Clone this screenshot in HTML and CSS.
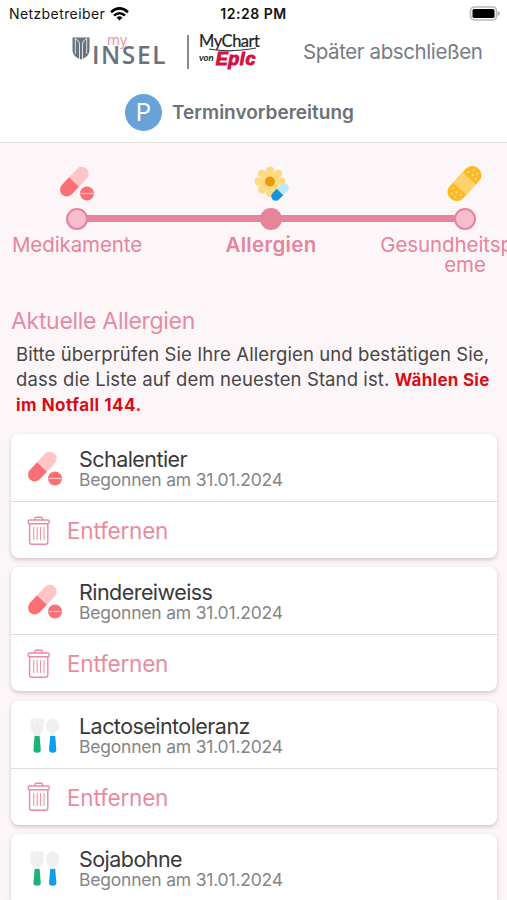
FILE: index.html
```html
<!DOCTYPE html>
<html lang="de">
<head>
    <meta charset="UTF-8">
    <meta name="viewport" content="width=device-width, initial-scale=1.0">
    <title>Terminvorbereitung</title>
    <link rel="stylesheet" href="styles.css">
</head>
<body>
    <!-- shared icons -->
    <svg class="sprite" width="0" height="0">
        <symbol id="pills" viewBox="0 0 36 36">
            <g transform="rotate(43 15 16)">
                <path d="M8.200 16V4.500a6.800 6.800 0 0 1 13.600 0V16z" fill="#fec4c6"/>
                <path d="M8.200 16h13.600v10.500a6.800 6.800 0 0 1-13.600 0z" fill="#fb6f74"/>
            </g>
            <circle cx="28" cy="27.500" r="7" fill="#fb6f74"/>
            <path d="M21.500 27.500h13" stroke="#fec4c6" stroke-width="1.200"/>
        </symbol>
        <symbol id="cutlery" viewBox="0 0 36 36">
            <path d="M3.500 2q0-1.500 1.500-1.500h10q1.500 0 1.500 1.500v7q0 4-3.500 6.500V18H7v-2.500Q3.500 13 3.500 9z" fill="#edeff1"/>
            <path d="M7.800.500v6M12.200.500v6" stroke="#fff" stroke-width=".6"/>
            <ellipse cx="25.700" cy="7.800" rx="6.600" ry="7.300" fill="#edeff1"/>
            <path d="M23.500 13H28v5h-4.500z" fill="#edeff1"/>
            <path d="M7.600 18h5l1.200 14q0 2.700-3.700 2.700T6.400 32z" fill="#1bb477"/>
            <path d="M23.200 18h5l1.200 14q0 2.700-3.700 2.700T22 32z" fill="#0c9fec"/>
        </symbol>
        <symbol id="trash" viewBox="0 0 24 30">
            <g fill="none" stroke="#e98ba0" stroke-width="1.400">
                <path d="M8 4V2.500Q8 1.200 9.500 1.200h4.500q1.500 0 1.500 1.300V4"/>
                <rect x="1.200" y="4" width="21" height="3.800" rx="1.600"/>
                <path d="M2.600 8v18q0 2.300 2.300 2.300h13.600q2.300 0 2.300-2.300V8"/>
                <path d="M6.800 11v13M10.200 11v13M13.600 11v13M17 11v13" stroke-width="1"/>
            </g>
        </symbol>
    </svg>

    <header class="header">
        <div class="status-bar">
            <div class="carrier">
                <span>Netzbetreiber</span>
                <svg width="19" height="14" viewBox="0 0 19 14">
                    <g fill="none" stroke="#000" stroke-width="2.500">
                        <path d="M1 5.200Q9.500-2.400 18 5.200"/>
                        <path d="M4 8.600q5.500-4.800 11 0"/>
                    </g>
                    <path d="M6.500 10.500q3-2.400 6 0L9.500 13.500z"/>
                </svg>
            </div>
            <span class="clock">12:28 PM</span>
            <svg class="battery" width="31" height="15" viewBox="0 0 31 15">
                <rect x="1.500" y="1" width="26" height="13" rx="4" fill="#fff" stroke="#b9b9b9" stroke-width="1.600"/>
                <rect x="3.500" y="3" width="22" height="9" rx="1.500"/>
                <path d="M28.800 5q2 .8 2 2.500t-2 2.500z" fill="#aaa"/>
            </svg>
        </div>
        <div class="brand-bar">
            <div class="insel">
                <svg width="18" height="23" viewBox="0 0 18 23">
                    <path d="M.5.500h17v13q0 6-8.500 9-8.500-3-8.500-9z" fill="#69737b"/>
                    <path d="M3.300 1v16M14.700 1v16M3.500 2q4 1 4 5v15M14.500 2q-4 1-4 5v15" fill="none" stroke="#fff" stroke-width=".8"/>
                </svg>
                <div class="insel-name">
                    <span class="my">my</span>
                    <span class="insel-text">INSEL</span>
                </div>
            </div>
            <div class="divider"></div>
            <div class="mychart">
                <span class="mychart-text">MyChart</span>
                <svg class="swoosh" width="48" height="5" viewBox="0 0 48 5"><path d="M0 2q20 4 47-1" fill="none" stroke="#333" stroke-width="1.200"/></svg>
                <div class="epic"><span class="von">von</span><span class="epic-text">Epic</span></div>
            </div>
            <a class="later">Später abschließen</a>
        </div>
        <div class="title-bar">
            <span class="avatar">P</span>
            <h1>Terminvorbereitung</h1>
        </div>
    </header>

    <nav class="stepper">
        <div class="step">
            <svg class="step-icon" width="36" height="36"><use href="#pills"/></svg>
            <span class="dot"></span>
            <span class="step-label">Medikamente</span>
        </div>
        <div class="step active">
            <svg class="step-icon" width="36" height="36" viewBox="0 0 36 36">
                <g fill="#ffda80">
                    <circle cx="17" cy="4.500" r="4"/><circle cx="25" cy="7.700" r="4"/>
                    <circle cx="28.500" cy="15.500" r="4"/><circle cx="25" cy="23.500" r="4"/>
                    <circle cx="17" cy="27" r="4"/><circle cx="9" cy="23.500" r="4"/>
                    <circle cx="5.500" cy="15.500" r="4"/><circle cx="9" cy="7.700" r="4"/>
                    <circle cx="17" cy="15.500" r="9"/>
                </g>
                <circle cx="17" cy="15.500" r="5" fill="#e89b0a"/>
                <g transform="rotate(45 27 26)">
                    <path d="M22.500 26v-6a4.500 4.500 0 0 1 9 0v6z" fill="#bce7fc"/>
                    <path d="M22.500 26h9v6a4.500 4.500 0 0 1-9 0z" fill="#1295dc"/>
                </g>
            </svg>
            <span class="dot"></span>
            <span class="step-label">Allergien</span>
        </div>
        <div class="step">
            <svg class="step-icon" width="36" height="36" viewBox="0 0 36 36">
                <g transform="rotate(43 17.500 17.500)">
                    <rect x="8.500" y="-3" width="18" height="41" rx="8.500" fill="#fdb924"/>
                    <rect x="8.500" y="10.500" width="18" height="14" fill="#ffd36b"/>
                    <g fill="#ffe3a0">
                        <circle cx="15" cy="1.500" r="1"/><circle cx="20" cy="1.500" r="1"/>
                        <circle cx="12.500" cy="6.500" r="1"/><circle cx="17.500" cy="5.500" r="1"/><circle cx="22.500" cy="6.500" r="1"/>
                        <circle cx="12.500" cy="28.500" r="1"/><circle cx="17.500" cy="29.500" r="1"/><circle cx="22.500" cy="28.500" r="1"/>
                        <circle cx="15" cy="33.500" r="1"/><circle cx="20" cy="33.500" r="1"/>
                    </g>
                </g>
            </svg>
            <span class="dot"></span>
            <span class="step-label">Gesundheitsprobl<br>eme</span>
        </div>
    </nav>

    <main class="content">
        <h2>Aktuelle Allergien</h2>
        <p class="intro">
            Bitte überprüfen Sie Ihre Allergien und bestätigen Sie,<br>
            dass die Liste auf dem neuesten Stand ist.
            <strong>Wählen Sie<br><span class="emergency">im Notfall 144.</span></strong>
        </p>

        <div class="card">
            <div class="card-info">
                <svg width="36" height="36"><use href="#pills"/></svg>
                <div>
                    <h3>Schalentier</h3>
                    <p class="since">Begonnen am 31.01.2024</p>
                </div>
            </div>
            <a class="remove"><svg width="24" height="30"><use href="#trash"/></svg><span>Entfernen</span></a>
        </div>
        <div class="card">
            <div class="card-info">
                <svg width="36" height="36"><use href="#pills"/></svg>
                <div>
                    <h3>Rindereiweiss</h3>
                    <p class="since">Begonnen am 31.01.2024</p>
                </div>
            </div>
            <a class="remove"><svg width="24" height="30"><use href="#trash"/></svg><span>Entfernen</span></a>
        </div>
        <div class="card">
            <div class="card-info">
                <svg width="36" height="36"><use href="#cutlery"/></svg>
                <div>
                    <h3>Lactoseintoleranz</h3>
                    <p class="since">Begonnen am 31.01.2024</p>
                </div>
            </div>
            <a class="remove"><svg width="24" height="30"><use href="#trash"/></svg><span>Entfernen</span></a>
        </div>
        <div class="card last">
            <div class="card-info">
                <svg width="36" height="36"><use href="#cutlery"/></svg>
                <div>
                    <h3>Sojabohne</h3>
                    <p class="since">Begonnen am 31.01.2024</p>
                </div>
            </div>
        </div>
    </main>
</body>
</html>
```
FILE: styles.css
```css
* {
    box-sizing: border-box;
}

html {
    overflow: hidden;
}

body {
    margin: 0;
    height: 900px;
    overflow: hidden;
    background-color: #fdf6f8;
    font-family: Inter, "Liberation Sans", sans-serif;
    color: #444;
}

h1, h2, h3, p {
    margin: 0;
    font-weight: 400;
}

svg {
    display: block;
    flex: none;
    overflow: visible;
}

.sprite {
    position: absolute;
}

/* header */
.header {
    height: 143px;
    background-color: #fff;
    border-bottom: 1px solid #e2dddf;
}

.status-bar {
    display: grid;
    grid-template-columns: 1fr auto 1fr;
    align-items: center;
    height: 27px;
    padding: 0 7px 0 9px;
    font-size: 14px;
    color: #111;
}

.carrier {
    display: flex;
    align-items: center;
    gap: 5px;
    letter-spacing: 0.4px;
}

.clock {
    margin-left: -2px;
    font-weight: 600;
    letter-spacing: 0.5px;
}

.battery {
    justify-self: end;
}

.brand-bar {
    display: flex;
    height: 52px;
    padding-left: 72px;
}

.insel {
    display: flex;
    width: 95px;
    padding-top: 10px;
    gap: 2px;
}

.insel-name {
    display: flex;
    flex-direction: column;
    font-family: "Open Sans", sans-serif;
}

.my {
    height: 9px;
    margin: -4px 0 0 15px;
    line-height: 14px;
    font-size: 14px;
    color: #f08aa0;
}

.insel-text {
    line-height: 26px;
    font-size: 24.5px;
    font-weight: 600;
    letter-spacing: 1.6px;
    color: #69737b;
}

.divider {
    width: 2px;
    height: 34px;
    margin: 8px 10px 0 20px;
    background-color: #858b90;
}

.mychart {
    width: 61px;
    padding-top: 6px;
    color: #222;
    font-family: Lato, sans-serif;
}

.mychart-text {
    display: block;
    height: 14px;
    line-height: 17px;
    font-size: 16.5px;
    letter-spacing: -0.5px;
    white-space: nowrap;
    -webkit-text-stroke: 0.2px #222;
}

.swoosh {
    margin-left: 10px;
}

.epic {
    display: flex;
    gap: 2px;
    margin-top: -1px;
    line-height: 17px;
    font-style: italic;
}

.von {
    font-size: 9.5px;
    font-weight: 700;
    line-height: 13px;
}

.epic-text {
    font-family: "Liberation Sans", sans-serif;
    font-size: 18px;
    font-weight: 700;
    letter-spacing: 0.6px;
    color: #d4113f;
    -webkit-text-stroke: 1px #d4113f;
}

.later {
    margin-left: 43px;
    line-height: 50px;
    font-size: 20.5px;
    letter-spacing: -0.4px;
    color: #777c82;
    white-space: nowrap;
}

.title-bar {
    display: flex;
    align-items: center;
    gap: 10px;
    height: 66px;
    padding-left: 125px;
}

.title-bar h1 {
    font-size: 19px;
    font-weight: 600;
    color: #6b7177;
}

.avatar {
    width: 37px;
    height: 37px;
    border-radius: 50%;
    background-color: #68a2d9;
    color: #fff;
    font-size: 24px;
    line-height: 37px;
    text-align: center;
}

/* progress */
.stepper {
    display: flex;
    width: 582px;
    height: 160px;
    margin-left: -20px;
    padding-top: 23px;
    color: #e6849b;
}

.step {
    display: flex;
    flex-direction: column;
    align-items: center;
    width: 194px;
    position: relative;
}

.step + .step::before {
    content: "";
    position: absolute;
    top: 49px;
    right: 50%;
    width: 194px;
    height: 7px;
    background-color: #e6849b;
}

.dot {
    width: 22px;
    height: 22px;
    margin: 6px 0 5px;
    border: 2px solid #e6849b;
    border-radius: 50%;
    background-color: #f5bdce;
    z-index: 1;
}

.active .dot {
    background-color: #e6849b;
}

.step-label {
    font-size: 20.5px;
    line-height: 20px;
    letter-spacing: -0.1px;
    text-align: center;
    white-space: nowrap;
}

.active .step-label {
    font-weight: 600;
    letter-spacing: 0.3px;
}

/* allergies */
.content {
    padding: 0 10px 0 11px;
}

.content h2 {
    height: 39px;
    padding-top: 3px;
    font-size: 23px;
    line-height: 30px;
    letter-spacing: -0.3px;
    color: #e48ca2;
}

.intro {
    height: 92px;
    padding-left: 5px;
    font-size: 18.5px;
    line-height: 25px;
    letter-spacing: 0.1px;
    white-space: nowrap;
    color: #464547;
}

.intro strong {
    font-size: 17px;
    line-height: 20px;
    font-weight: 700;
    letter-spacing: 0.25px;
    color: #d80d16;
}

.emergency {
    letter-spacing: 0.5px;
}

.card {
    height: 124px;
    margin-bottom: 9.25px;
    border-radius: 8px;
    background-color: #fff;
    box-shadow: 0 2px 4px rgba(80, 50, 60, 0.25);
}

.card.last {
    height: 66px;
    margin-bottom: 0;
    border-radius: 8px 8px 0 0;
}

.card-info {
    display: flex;
    align-items: center;
    gap: 16px;
    height: 68px;
    padding: 3px 16px 0;
    border-bottom: 1px solid #dcdcdc;
}

.card.last .card-info {
    border-bottom: 0;
}

.card-info h3 {
    font-size: 21.5px;
    line-height: 22px;
    letter-spacing: -0.55px;
    color: #39393b;
}

.since {
    font-size: 17.5px;
    line-height: 20px;
    letter-spacing: -0.2px;
    color: #858587;
}

.remove {
    display: flex;
    align-items: center;
    gap: 16px;
    height: 56px;
    padding: 1px 16px 0;
    font-size: 22.5px;
    letter-spacing: -0.2px;
    color: #e98ba0;
}
```
